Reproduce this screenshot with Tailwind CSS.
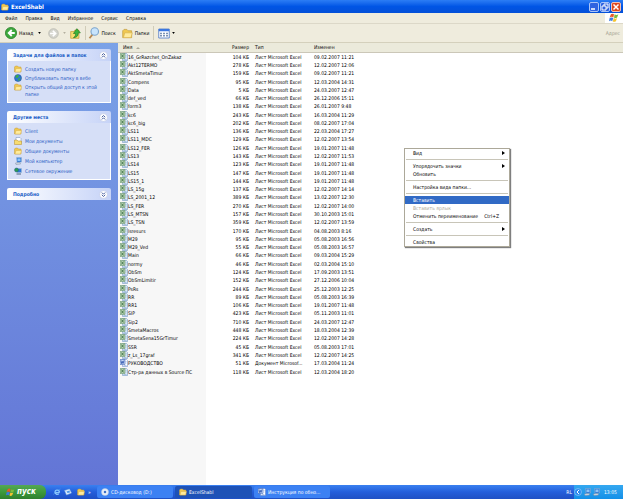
<!DOCTYPE html>
<html lang="ru">
<head>
    <meta charset="UTF-8">
    <meta name="viewport" content="width=device-width, initial-scale=1.0">
    <title>ExcelShabl</title>
    <script src="https://cdn.jsdelivr.net/npm/@tailwindcss/browser@4"></script>
</head>
<body class="relative flex flex-col h-screen overflow-hidden bg-white font-['DejaVu_Sans_Condensed','DejaVu_Sans',sans-serif] text-[5px] leading-[8px] text-black">

    <!-- Общие иконки -->
    <svg class="hidden">
        <symbol id="folder" viewBox="0 0 16 16">
            <path d="M1 4l2-2h4l2 2h5v10H1z" fill="#f0c850" stroke="#c09a3c"/>
            <path d="M2 14l2-7h11l-2 7z" fill="#ffeb9c" stroke="#d8b04c"/>
        </symbol>
        <symbol id="excel" viewBox="0 0 16 16">
            <path d="M5 1h8l2 2v12H5z" fill="#dce8f8" stroke="#5c88b8"/>
            <path d="M11 5h2M11 8h2M7 13h6" stroke="#7ba0cc"/>
            <path d="M0 1h10v10H0z" fill="#b4d0b0" stroke="#5c8c60"/>
            <path d="M2.500 3l5 6M7.500 3l-5 6" stroke="#2c6438" stroke-width="1.500"/>
        </symbol>
        <symbol id="word" viewBox="0 0 16 16">
            <path d="M5 1h8l2 2v12H5z" fill="#fff" stroke="#5a7cc0"/>
            <path d="M11 5h2M11 8h2M7 13h6" stroke="#6d92d6"/>
            <path d="M0 1h10v10H0z" fill="#c4d6f6" stroke="#3058b0"/>
            <path d="M2 3l1 6 2-4 1 4 2-6" fill="none" stroke="#1f48a4" stroke-width="1.500"/>
        </symbol>
        <symbol id="flag" viewBox="0 0 16 16">
            <path d="M3 2q3-2 5 0L7 7Q4 5 1 7z" fill="#e8562a"/>
            <path d="M9 2q3 2 6 0l-2 5q-3 2-5 0z" fill="#7cba3c"/>
            <path d="M1 8q3-2 6 0l-2 5q-2-2-5 0z" fill="#3c7ce0"/>
            <path d="M8 8q2 2 5 0l-2 5q-3 2-5 0z" fill="#f4c430"/>
        </symbol>
        <symbol id="computer" viewBox="0 0 16 16">
            <path d="M5 1h10v9l-9 1z" fill="#2f78d8" stroke="#9db4cc"/>
            <path d="M7 3h6v5H7z" fill="#8cc4f8"/>
            <path d="M3 12l9-1 1 3-9 1z" fill="#dce4ec" stroke="#7888a0"/>
        </symbol>
        <symbol id="chevrons" viewBox="0 0 16 16">
            <circle cx="8" cy="8" r="7" fill="#fff" stroke="#b4c0e0"/>
            <path d="M5 7.500l3-3 3 3M5 11.500l3-3 3 3" fill="none" stroke="#26418c" stroke-width="1.500"/>
        </symbol>
    </svg>

    <!-- Заголовок окна -->
    <header class="flex items-center h-[13px] shrink-0 bg-linear-to-b from-[#2b7df5] via-[#0055e5] to-[#0450d8] text-white">
        <svg class="size-2 ml-px"><use href="#folder"/></svg>
        <h1 class="flex-1 ml-0.5 text-[6px] font-bold">ExcelShabl</h1>
        <div class="flex gap-px pr-0.5">
            <button aria-label="Свернуть" class="size-[10px] rounded-xs border border-[#a9c4f8] bg-[#2f63e0]"><svg viewBox="0 0 8 8"><path d="M1 6h4" stroke="#fff" stroke-width="1.500"/></svg></button>
            <button aria-label="Восстановить" class="size-[10px] rounded-xs border border-[#a9c4f8] bg-[#2f63e0]"><svg viewBox="0 0 8 8"><path d="M3 3V1h4v4H5M1 3h4v4H1z" fill="none" stroke="#fff"/></svg></button>
            <button aria-label="Закрыть" class="size-[10px] rounded-xs border border-[#f4c0b4] bg-[#dc4820]"><svg viewBox="0 0 8 8"><path d="M1.500 1.500l5 5M6.500 1.500l-5 5" stroke="#fff" stroke-width="1.500"/></svg></button>
        </div>
    </header>

    <!-- Строка меню -->
    <nav class="flex h-[11px] shrink-0 bg-[#efecdd] border-b border-[#dcd8c8]">
        <div class="flex flex-1 items-center gap-2 pl-[5px]">
            <button>Файл</button>
            <button>Правка</button>
            <button>Вид</button>
            <button>Избранное</button>
            <button>Сервис</button>
            <button>Справка</button>
        </div>
        <div class="flex w-[18px] items-center justify-center bg-white"><svg class="size-[10px]"><use href="#flag"/></svg></div>
    </nav>

    <!-- Панель инструментов -->
    <div class="flex items-center h-[19px] shrink-0 bg-[#efecdd] border-b border-[#d4d0bc] pl-[5px] pr-[3px]">
        <button class="flex items-center gap-0.5">
            <svg class="size-3" viewBox="0 0 16 16"><circle cx="8" cy="8" r="7.500" fill="#3ca83c" stroke="#2a7c2a"/><path d="M9 4L5 8l4 4M5 8h8" fill="none" stroke="#fff" stroke-width="2.500"/></svg>
            Назад
            <svg class="ml-[3px] w-[3px] h-0.5" viewBox="0 0 4 3"><path d="M0 0h4L2 3z"/></svg>
        </button>
        <button aria-label="Вперед" class="flex items-center gap-1 ml-[7px]">
            <svg class="size-[11px]" viewBox="0 0 16 16"><circle cx="8" cy="8" r="7" fill="#d4d4cc" stroke="#b4b4ac"/><path d="M7 4l4 4-4 4M11 8H3" fill="none" stroke="#fff" stroke-width="2.500"/></svg>
            <svg class="w-[3px] h-0.5" viewBox="0 0 4 3"><path d="M0 0h4L2 3z" fill="#b4b0a0"/></svg>
        </button>
        <button aria-label="Вверх" class="ml-1">
            <svg class="size-[11px]" viewBox="0 0 16 16"><path d="M1 5h5l1-2h6v12H1z" fill="#f8dc70" stroke="#c09a30"/><path d="M5 14q4-2 3-6H5l5-7 5 6h-3q0 7-7 7z" fill="#3cb43c" stroke="#237c23"/></svg>
        </button>
        <div class="w-px h-3.5 ml-1 mr-0.5 bg-[#d0ccb8]"></div>
        <button class="flex items-center gap-px">
            <svg class="size-3" viewBox="0 0 16 16"><path d="M6 10l-4 5" stroke="#b88850" stroke-width="2.500"/><circle cx="9" cy="6" r="5" fill="#c8e4fc" stroke="#7ca4cc" stroke-width="1.500"/></svg>
            Поиск
        </button>
        <button class="flex items-center gap-0.5 ml-1.5">
            <svg class="size-[11px]"><use href="#folder"/></svg>
            Папки
        </button>
        <div class="w-px h-3.5 mx-1 bg-[#d0ccb8]"></div>
        <button aria-label="Вид" class="flex items-center gap-0.5">
            <svg class="w-3 h-[11px]" viewBox="0 0 16 14"><path d="M1 1h14v12H1z" fill="#fff" stroke="#3c6cc0"/><path d="M1 2.500h14" stroke="#3c78e0" stroke-width="3"/><path d="M3 7h10M3 10h10" stroke="#50709c" stroke-width="2" stroke-dasharray="2 2"/></svg>
            <svg class="w-[3px] h-0.5" viewBox="0 0 4 3"><path d="M0 0h4L2 3z"/></svg>
        </button>
        <span class="ml-auto text-[#a09c8c]">Адрес</span>
    </div>

    <main class="flex flex-1 min-h-0">
        <!-- Боковая панель задач -->
        <aside class="flex flex-col gap-2 w-[118px] shrink-0 pt-1.5 pl-[7px] pr-[7px] bg-linear-to-b from-[#7ba2e7] to-[#6375d6] text-[#2a5cc4]">
            <section>
                <h2 class="flex items-center justify-between h-3 pl-1.5 pr-[3px] rounded-t-xs bg-linear-to-r from-white to-[#c6d3f7] font-bold text-[#215dc6]">Задачи для файлов и папок
                    <svg class="size-[9px] shrink-0"><use href="#chevrons"/></svg>
                </h2>
                <ul class="flex flex-col gap-px h-[42px] pt-1 pl-1.5 pr-2 border border-t-0 border-white bg-[#d6dff7]">
                    <li class="flex gap-[3px]"><svg class="size-2 shrink-0"><use href="#folder"/></svg><a href="#">Создать новую папку</a></li>
                    <li class="flex gap-[3px]"><svg class="size-2 shrink-0" viewBox="0 0 16 16"><circle cx="8" cy="8" r="7" fill="#2c78d0" stroke="#1c4c8c"/><path d="M4 3q5-2 6 1L7 8 3 7zM9 9l4-1-2 5H8z" fill="#3cb048"/></svg><a href="#">Опубликовать папку в вебе</a></li>
                    <li class="flex gap-[3px]"><svg class="size-2 shrink-0"><use href="#folder"/></svg><a href="#" class="leading-[7px] pt-px">Открыть общий доступ к этой папке</a></li>
                </ul>
            </section>
            <section>
                <h2 class="flex items-center justify-between h-3 pl-1.5 pr-[3px] rounded-t-xs bg-linear-to-r from-white to-[#c6d3f7] font-bold text-[#215dc6]">Другие места
                    <svg class="size-[9px] shrink-0"><use href="#chevrons"/></svg>
                </h2>
                <ul class="flex flex-col gap-0.5 h-[57px] pt-1 pl-1.5 border border-t-0 border-white bg-[#d6dff7]">
                    <li class="flex gap-[3px]"><svg class="size-2"><use href="#folder"/></svg><a href="#">Client</a></li>
                    <li class="flex gap-[3px]"><svg class="size-2" viewBox="0 0 16 16"><path d="M4 1h8l2 2v9H4z" fill="#fff" stroke="#6c88b8"/><path d="M1 6h5l2 2h7v7H1z" fill="#f8dc70" stroke="#b08828"/></svg><a href="#">Мои документы</a></li>
                    <li class="flex gap-[3px]"><svg class="size-2"><use href="#folder"/></svg><a href="#">Общие документы</a></li>
                    <li class="flex gap-[3px]"><svg class="size-2"><use href="#computer"/></svg><a href="#">Мой компьютер</a></li>
                    <li class="flex gap-[3px]"><svg class="size-2" viewBox="0 0 16 16"><path d="M6 3h9v8H6z" fill="#2f78d8" stroke="#9db4cc"/><circle cx="5" cy="6" r="4" fill="#2c9c50" stroke="#1c5c8c"/><path d="M5 14h9" stroke="#4c6480" stroke-width="2"/></svg><a href="#">Сетевое окружение</a></li>
                </ul>
            </section>
            <section>
                <h2 class="flex items-center justify-between h-3 pl-1.5 pr-[3px] rounded-t-xs bg-linear-to-r from-white to-[#c6d3f7] font-bold text-[#215dc6]">Подробно
                    <svg class="size-[9px] shrink-0 rotate-180"><use href="#chevrons"/></svg>
                </h2>
            </section>
        </aside>

        <!-- Список файлов -->
        <div class="flex-1 min-w-0 bg-[linear-gradient(to_right,#f7f7f7_88px,#fff_88px)]">
            <table class="w-full h-[333px] table-fixed">
                <thead class="bg-[#ebeadb] text-left">
                    <tr class="h-[9px] border-b border-[#cbc7b8]">
                        <th class="w-[88px] p-0 pl-[5px] font-normal">Имя <svg class="inline ml-0.5 w-1 h-0.5" viewBox="0 0 4 2"><path d="M0 2h4L2 0z" fill="#aca899"/></svg></th>
                        <th class="w-[43px] p-0 font-normal text-right">Размер</th>
                        <th class="w-[65px] p-0 pl-1.5 font-normal">Тип</th>
                        <th class="p-0 font-normal">Изменен</th>
                    </tr>
                </thead>
                <tbody id="files"></tbody>
            </table>
        </div>
    </main>

    <!-- Панель задач Windows -->
    <footer class="flex items-center h-3.5 shrink-0 bg-linear-to-b from-[#3a80f0] via-[#245edb] to-[#1f50c4] text-white">
        <button class="flex items-center gap-0.5 w-[46px] h-full pl-1.5 rounded-r-md bg-linear-to-b from-[#55a855] via-[#3c9a3c] to-[#2f7f2f] font-bold italic text-[8px]">
            <svg class="size-[9px]"><use href="#flag"/></svg>пуск
        </button>
        <div class="flex items-center gap-[3px] w-[51px] pl-[7px]">
            <svg class="size-2" viewBox="0 0 16 16"><path d="M13 9H4q0-5 4-5 5 0 5 5M4 9q1 5 8 3" fill="none" stroke="#8cc8fc" stroke-width="2.500"/><path d="M1 13Q6 3 15 2" fill="none" stroke="#5ca8f4"/></svg>
            <svg class="size-2" viewBox="0 0 16 16"><path d="M1 5l10-3 4 8-10 4z" fill="#dcecfc" stroke="#7ca8dc"/><path d="M5 7l6-2 1 4-5 1z" fill="#4c94e4"/></svg>
            <svg class="size-2 ml-0.5"><use href="#folder"/></svg>
            <span class="self-start">»</span>
        </div>
        <div class="flex flex-1 gap-0.5">
            <button class="flex items-center gap-0.5 w-[76px] h-3 pl-1 rounded-xs bg-[#3c81f3]">
                <svg class="size-2" viewBox="0 0 16 16"><circle cx="8" cy="8" r="7" fill="#e8eef8" stroke="#b4c4dc"/><circle cx="8" cy="8" r="2.500" fill="#3c70c8"/></svg>CD-дисковод (D:)
            </button>
            <button class="flex items-center gap-0.5 w-[77px] h-3 pl-1 rounded-xs bg-[#1e52b7]">
                <svg class="size-2"><use href="#folder"/></svg>ExcelShabl
            </button>
            <button class="flex items-center gap-0.5 w-[76px] h-3 pl-1 rounded-xs bg-[#3c81f3]">
                <svg class="size-2"><use href="#word"/></svg>Инструкция по обно...
            </button>
        </div>
        <span class="mr-0.5">RL</span>
        <div class="flex items-center gap-px w-[49px] h-full bg-linear-to-b from-[#34a8f0] to-[#1290e8]">
            <svg class="size-2" viewBox="0 0 16 16"><circle cx="8" cy="8" r="7" fill="#2c8cf0" stroke="#b4dcfc"/><path d="M10 4L6 8l4 4" fill="none" stroke="#fff" stroke-width="2"/></svg>
            <svg class="size-2"><use href="#computer"/></svg>
            <svg class="size-2"><use href="#computer"/></svg>
            <span class="ml-[3px]">13:05</span>
        </div>
    </footer>

    <!-- Контекстное меню -->
    <div class="absolute left-[404px] top-[148px] w-[106px] border border-[#aca899] bg-white shadow-[1px_1px_1px_#00000080]">
        <button class="flex w-full h-2 pl-2 pr-1 items-center justify-between">Вид<svg class="w-[3px] h-1" viewBox="0 0 3 4"><path d="M0 0v4l3-2z"/></svg></button>
        <hr class="my-0.5 mx-px border-[#c8c5b8]">
        <button class="flex w-full h-2 pl-2 pr-1 items-center justify-between">Упорядочить значки<svg class="w-[3px] h-1" viewBox="0 0 3 4"><path d="M0 0v4l3-2z"/></svg></button>
        <button class="flex w-full h-2 pl-2 items-center">Обновить</button>
        <hr class="my-0.5 mx-px border-[#c8c5b8]">
        <button class="flex w-full h-2 pl-2 items-center">Настройка вида папки...</button>
        <hr class="my-0.5 mx-px border-[#c8c5b8]">
        <button class="flex w-full h-2 pl-2 items-center bg-[#316ac5] text-white">Вставить</button>
        <button class="flex w-full h-2 pl-2 items-center text-[#aca899]" disabled>Вставить ярлык</button>
        <button class="flex w-full h-2 pl-2 pr-2.5 items-center justify-between">Отменить переименование<span>Ctrl+Z</span></button>
        <hr class="my-0.5 mx-px border-[#c8c5b8]">
        <button class="flex w-full h-2 pl-2 pr-1 items-center justify-between">Создать<svg class="w-[3px] h-1" viewBox="0 0 3 4"><path d="M0 0v4l3-2z"/></svg></button>
        <hr class="my-0.5 mx-px border-[#c8c5b8]">
        <button class="flex w-full h-2 pl-2 items-center">Свойства</button>
    </div>

    <script>
        // имя, размер в КБ, дата изменения
        const files = [
            ['16_GrRazchet_OnZakaz', 104, '09.02.2007 11:21'],
            ['Akt12TERMO', 278, '12.02.2007 12:06'],
            ['AktSmetaTimur', 159, '09.02.2007 11:21'],
            ['Compens', 95, '12.03.2004 14:31'],
            ['Data', 5, '24.03.2007 12:47'],
            ['def_ved', 66, '26.12.2006 15:11'],
            ['form3', 138, '26.01.2007 9:48'],
            ['kc6', 243, '16.03.2004 11:29'],
            ['kc6_big', 202, '08.02.2007 17:04'],
            ['LS11', 136, '22.03.2004 17:27'],
            ['LS11_MDC', 129, '12.02.2007 13:54'],
            ['LS12_FER', 126, '19.01.2007 11:48'],
            ['LS13', 143, '12.02.2007 11:53'],
            ['LS14', 123, '19.01.2007 11:48'],
            ['LS15', 147, '19.01.2007 11:48'],
            ['LS15_1', 144, '19.01.2007 11:48'],
            ['LS_15g', 137, '12.02.2007 14:14'],
            ['LS_2001_12', 389, '13.02.2007 12:30'],
            ['LS_FER', 270, '12.02.2007 14:00'],
            ['LS_MTSN', 157, '30.10.2003 15:01'],
            ['LS_TSN', 359, '12.02.2007 13:59'],
            ['lsresurs', 170, '04.08.2003 8:16'],
            ['M29', 95, '05.08.2003 16:56'],
            ['M29_Ved', 55, '05.08.2003 16:57'],
            ['Main', 66, '09.03.2004 15:29'],
            ['normy', 46, '02.03.2004 15:10'],
            ['ObSm', 124, '17.09.2003 13:51'],
            ['ObSmLimitir', 152, '27.12.2006 10:04'],
            ['PsRs', 244, '25.12.2003 12:25'],
            ['RR', 89, '05.08.2003 16:39'],
            ['RR1', 106, '19.01.2007 11:48'],
            ['SIP', 423, '05.11.2003 11:01'],
            ['Sip2', 710, '24.03.2007 12:47'],
            ['SmetaMacros', 448, '18.03.2004 12:39'],
            ['SmetaSena15GrTimur', 224, '12.02.2007 14:28'],
            ['SSR', 45, '05.08.2003 17:01'],
            ['z_Ls_17graf', 341, '12.02.2007 14:25'],
            ['РУКОВОДСТВО', 51, '17.03.2004 11:24', 'word'],
            ['Стр-ра данных в Source ПС', 118, '12.03.2004 18:20']
        ];

        document.getElementById('files').innerHTML = files.map(([name, size, date, icon = 'excel']) => `
            <tr>
                <td class="p-0 pl-0.5"><div class="flex items-center whitespace-nowrap"><svg class="size-2 shrink-0"><use href="#${icon}"/></svg>${name}</div></td>
                <td class="p-0 text-right">${size} КБ</td>
                <td class="p-0 pl-1.5 whitespace-nowrap">${icon === 'word' ? 'Документ Microsof...' : 'Лист Microsoft Excel'}</td>
                <td class="p-0">${date}</td>
            </tr>`).join('');
    </script>
</body>
</html>
